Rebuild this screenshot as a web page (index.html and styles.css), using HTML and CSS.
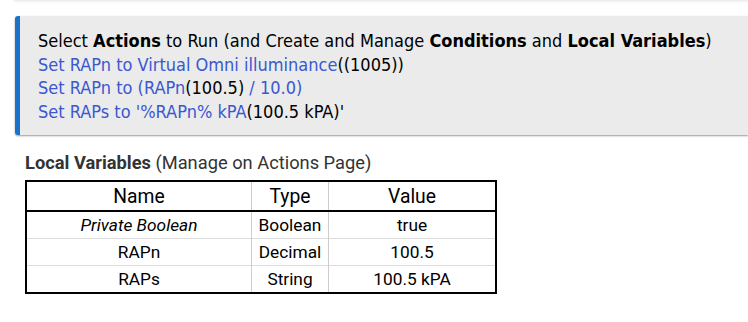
FILE: index.html
```html
<!DOCTYPE html>
<html lang="en">
<head>
  <meta charset="UTF-8">
  <title>Rule Actions</title>
  <link rel="stylesheet" href="styles.css">
</head>
<body>

<!-- bottom edge of the card above -->
<div class="prev-card"></div>

<!-- actions box -->
<div class="actions-box">
  <div class="line">Select <b>Actions</b> to Run (and Create and Manage <b>Conditions</b> and <b>Local Variables</b>)</div>
  <div class="line"><a href="#">Set RAPn to Virtual Omni illuminance</a>((1005))</div>
  <div class="line"><a href="#">Set RAPn to (RAPn</a>(100.5)<a href="#"> / 10.0)</a></div>
  <div class="line"><a href="#">Set RAPs to '%RAPn% kPA</a>(100.5 kPA)'</div>
</div>

<!-- local variables -->
<div class="vars">
  <div class="vars-title"><b>Local Variables</b> (Manage on Actions Page)</div>
  <table class="vars-table">
    <thead>
      <tr><th class="col-name">Name</th><th class="col-type">Type</th><th class="col-value">Value</th></tr>
    </thead>
    <tbody>
      <tr><td><i>Private Boolean</i></td><td>Boolean</td><td>true</td></tr>
      <tr><td>RAPn</td><td>Decimal</td><td>100.5</td></tr>
      <tr><td>RAPs</td><td>String</td><td>100.5 kPA</td></tr>
    </tbody>
  </table>
</div>

</body>
</html>
```

FILE: styles.css
```css
body {
  margin: 0;
  background: #fff;
  font-family: Roboto, "Liberation Sans", sans-serif;
  color: #000;
}

.prev-card {
  margin-left: 14px;
  height: 1px;
  background: #ececec;
  box-shadow: 0 1px 2px rgba(0, 0, 0, 0.08);
}

/* actions box */
.actions-box {
  margin: 15px 0 0 15px;
  background: #ebebeb;
  border-left: 5px solid #1a73c8;
  border-radius: 3px 0 0 3px;
  box-shadow: 0 1px 2px rgba(0, 0, 0, 0.4);
  padding: 13px 0 12px 18px;
  font-family: "DejaVu Sans Condensed", "Liberation Sans", sans-serif;
  font-size: 18px;
  line-height: 23.5px;
}
.actions-box a {
  color: #3a58d0;
  text-decoration: none;
}

/* local variables */
.vars {
  margin: 17px 0 0 25px;
}
.vars-title {
  font-size: 18.3px;
  color: #333;
  line-height: 22px;
  margin-bottom: 6px;
}
.vars-title b {
  font-weight: 700;
}
.vars-table {
  border-collapse: collapse;
  border: 2px solid #000;
  width: 472px;
  font-size: 17.3px;
}
.vars-table th {
  font-weight: 400;
  font-size: 19.3px;
  height: 28px;
  border-bottom: 2px solid #000;
  border-left: 1px solid #ccc;
  padding: 0;
}
.vars-table td {
  text-align: center;
  height: 26px;
  padding: 0;
  border-left: 1px solid #ccc;
  border-top: 1px solid #ddd;
}
.vars-table .col-name { width: 224px; }
.vars-table .col-type { width: 76px; }
```
